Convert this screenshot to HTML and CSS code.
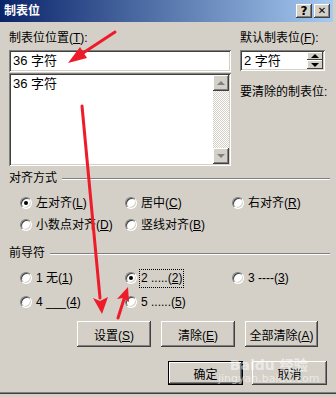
FILE: index.html
```html
<!DOCTYPE html>
<html lang="zh-CN">
<head>
    <meta charset="UTF-8">
    <title>制表位</title>
    <link rel="stylesheet" href="styles.css">
</head>
<body>
    <div class="window">
        <div class="title-bar">
            <span class="title">制表位</span>
            <div class="caption-btns">
                <span class="cap-btn">?</span>
                <span class="cap-btn close">&#x2715;</span>
            </div>
        </div>

        <div class="dialog">
            <div class="top">
                <div class="col-left">
                    <div class="lbl">制表位位置(<u>T</u>):</div>
                    <div class="field">36 字符</div>
                    <div class="listbox">
                        <div class="list-items">
                            <div class="list-item">36 字符</div>
                        </div>
                        <div class="scrollbar">
                            <span class="sb-btn"><i class="tri-up grey"></i></span>
                            <span class="sb-track"></span>
                            <span class="sb-btn"><i class="tri-down grey"></i></span>
                        </div>
                    </div>
                </div>
                <div class="col-right">
                    <div class="lbl">默认制表位(<u>F</u>):</div>
                    <div class="field spin">
                        <span>2 字符</span>
                        <div class="spin-btns">
                            <span class="spin-btn"><i class="tri-up"></i></span>
                            <span class="spin-btn"><i class="tri-down"></i></span>
                        </div>
                    </div>
                    <div class="lbl clear-lbl">要清除的制表位:</div>
                </div>
            </div>

            <div class="group-head"><span>对齐方式</span><div class="etch"></div></div>
            <div class="radio-grid align-grid">
                <div class="radio-item"><span class="radio checked"></span><span class="rlabel">左对齐(<u>L</u>)</span></div>
                <div class="radio-item"><span class="radio"></span><span class="rlabel">居中(<u>C</u>)</span></div>
                <div class="radio-item"><span class="radio"></span><span class="rlabel">右对齐(<u>R</u>)</span></div>
                <div class="radio-item"><span class="radio"></span><span class="rlabel">小数点对齐(<u>D</u>)</span></div>
                <div class="radio-item"><span class="radio"></span><span class="rlabel">竖线对齐(<u>B</u>)</span></div>
            </div>

            <div class="group-head leader-head"><span>前导符</span><div class="etch"></div></div>
            <div class="radio-grid leader-grid">
                <div class="radio-item"><span class="radio"></span><span class="rlabel">1 无(<u>1</u>)</span></div>
                <div class="radio-item"><span class="radio checked"></span><span class="rlabel focused">2 .....(<u>2</u>)</span></div>
                <div class="radio-item"><span class="radio"></span><span class="rlabel">3 ----(<u>3</u>)</span></div>
                <div class="radio-item"><span class="radio"></span><span class="rlabel">4 ___(<u>4</u>)</span></div>
                <div class="radio-item"><span class="radio"></span><span class="rlabel">5 ......(<u>5</u>)</span></div>
            </div>

            <div class="btn-row">
                <button class="btn">设置(<u>S</u>)</button>
                <button class="btn">清除(<u>E</u>)</button>
                <button class="btn">全部清除(<u>A</u>)</button>
            </div>
            <div class="btn-row bottom-row">
                <button class="btn default">确定</button>
                <button class="btn">取消</button>
            </div>
        </div>

        <!-- red annotation arrows drawn over the dialog -->
        <svg class="annot" width="336" height="397" viewBox="0 0 336 397">
            <line x1="115" y1="32" x2="80" y2="55" stroke="#ee1c2a" stroke-width="3" stroke-linecap="round"/>
            <polygon points="68,63 87,58 80,47" fill="#ee1c2a"/>
            <line x1="82" y1="106" x2="100" y2="298" stroke="#ee1c2a" stroke-width="3" stroke-linecap="round"/>
            <polygon points="102,314 108,297 100,301 93,298" fill="#ee1c2a"/>
            <line x1="118" y1="318" x2="124" y2="299" stroke="#ee1c2a" stroke-width="3" stroke-linecap="round"/>
            <polygon points="128,287 117,299 123,298 129,302" fill="#ee1c2a"/>
        </svg>

        <div class="watermark">
            <div class="wm-logo">Baidu 经验</div>
            <div class="wm-url">jingyan.baidu.com</div>
        </div>
    </div>
</body>
</html>
```

FILE: styles.css
```css
body {
    margin: 0;
    background-color: #d4d0c8;
    font-family: "Liberation Sans", "Noto Sans CJK SC", sans-serif;
    font-size: 12px;
    color: #000;
}

u {
    text-decoration: underline;
    text-underline-offset: 1px;
}

.window {
    position: relative;
    width: 336px;
    height: 394px;
    box-sizing: border-box;
    border-bottom: 1px solid #404040;
    box-shadow: inset 0 -1px #808080;
    overflow: hidden;
}

.title-bar {
    height: 22px;
    margin-right: 3px;
    background: linear-gradient(to right, #0a246a, #a6caf0);
    display: flex;
    align-items: center;
    justify-content: space-between;
    padding: 0 3px 0 4px;
}

.title {
    color: #fff;
    font-weight: bold;
    font-size: 12px;
    line-height: 14px;
}

.caption-btns {
    display: flex;
    gap: 2px;
}

.cap-btn {
    width: 16px;
    height: 14px;
    box-sizing: border-box;
    background-color: #d4d0c8;
    box-shadow: inset -1px -1px #404040, inset 1px 1px #fff, inset -2px -2px #808080;
    font-weight: bold;
    font-size: 12px;
    line-height: 14px;
    text-align: center;
    font-family: "DejaVu Sans", sans-serif;
}

.cap-btn.close {
    font-size: 10px;
}

.dialog {
    padding: 9px 6px 0 9px;
}

.top {
    display: grid;
    grid-template-columns: 222px 85px;
    column-gap: 9px;
}

.lbl {
    line-height: 15px;
    height: 15px;
    white-space: nowrap;
}

.field {
    margin-top: 4px;
    height: 22px;
    box-sizing: border-box;
    background-color: #fff;
    box-shadow: inset 1px 1px #808080, inset -1px -1px #fff, inset 2px 2px #404040, inset -2px -2px #d4d0c8;
    padding: 0 4px;
    line-height: 22px;
    font-size: 13px;
}

.spin {
    height: 21px;
    line-height: 21px;
    display: flex;
    justify-content: space-between;
    padding-right: 2px;
}

.spin-btns {
    display: flex;
    flex-direction: column;
    padding-top: 2px;
}

.spin-btn {
    width: 16px;
    height: 8px;
    background-color: #d4d0c8;
    box-shadow: inset -1px -1px #404040, inset 1px 1px #fff;
    display: flex;
    align-items: center;
    justify-content: center;
}

.spin-btn + .spin-btn {
    height: 9px;
}

.tri-up,
.tri-down {
    width: 0;
    height: 0;
    border-left: 4px solid transparent;
    border-right: 4px solid transparent;
}

.tri-up {
    border-bottom: 4px solid #000;
}

.tri-down {
    border-top: 4px solid #000;
}

.tri-up.grey {
    border-bottom-color: #808080;
}

.tri-down.grey {
    border-top-color: #808080;
}

.listbox {
    margin-top: 1px;
    height: 93px;
    box-sizing: border-box;
    background-color: #fff;
    box-shadow: inset 1px 1px #808080, inset -1px -1px #fff, inset 2px 2px #404040, inset -2px -2px #d4d0c8;
    padding: 2px;
    display: flex;
}

.list-items {
    flex: 1;
    padding: 1px 2px;
}

.list-item {
    line-height: 15px;
    font-size: 13px;
}

.scrollbar {
    width: 16px;
    display: flex;
    flex-direction: column;
}

.sb-btn {
    height: 16px;
    background-color: #d4d0c8;
    box-shadow: inset -1px -1px #404040, inset 1px 1px #fff, inset -2px -2px #808080;
    display: flex;
    align-items: center;
    justify-content: center;
}

.sb-track {
    flex: 1;
    background: repeating-conic-gradient(#fff 0 25%, #d4d0c8 0 50%) 0 0 / 2px 2px;
}

.clear-lbl {
    margin-top: 14px;
}

.group-head {
    display: flex;
    align-items: center;
    margin-top: 5px;
    line-height: 15px;
}

.etch {
    flex: 1;
    margin-left: 5px;
    border-top: 1px solid #808080;
    border-bottom: 1px solid #fff;
}

.leader-head {
    margin-top: 10px;
}

.radio-grid {
    display: grid;
    grid-template-columns: 105px 107px auto;
    padding-left: 11px;
}

.align-grid {
    margin-top: 6px;
    grid-auto-rows: 22px;
}

.leader-grid {
    margin-top: 5px;
    grid-auto-rows: 24px;
}

.radio-item {
    display: flex;
    align-items: center;
    gap: 2px;
    white-space: nowrap;
}

.radio {
    position: relative;
    width: 12px;
    height: 12px;
    box-sizing: border-box;
    border-radius: 50%;
    background-color: #fff;
    border: 1px solid;
    border-color: #808080 #fff #fff #808080;
    box-shadow: inset 1px 1px #404040, inset -1px -1px #d4d0c8;
    flex-shrink: 0;
}

.radio.checked::after {
    content: "";
    position: absolute;
    left: 3px;
    top: 3px;
    width: 4px;
    height: 4px;
    border-radius: 50%;
    background-color: #000;
}

.rlabel {
    padding: 1px 1px;
    border: 1px solid transparent;
    line-height: 15px;
}

.rlabel.focused {
    border: 1px dotted #000;
}

.btn-row {
    display: flex;
    gap: 10px;
    padding-left: 68px;
    margin-top: 7px;
}

.btn {
    width: 74px;
    height: 26px;
    border: none;
    background-color: #d4d0c8;
    box-shadow: inset -1px -1px #404040, inset 1px 1px #fff, inset -2px -2px #808080;
    font-family: "Liberation Sans", "Noto Sans CJK SC", sans-serif;
    font-size: 12px;
    color: #000;
    padding: 0;
}

.btn-row .btn:last-child {
    width: 73px;
}

.bottom-row {
    margin-top: 14px;
    padding-left: 159px;
    gap: 9px;
}

.bottom-row .btn,
.bottom-row .btn:last-child {
    width: 75px;
    height: 24px;
}

.btn.default {
    box-shadow: inset 0 0 0 1px #000, inset -2px -2px #404040, inset 2px 2px #fff, inset -3px -3px #808080;
}

.annot {
    position: absolute;
    left: 0;
    top: 0;
    pointer-events: none;
}

.watermark {
    position: absolute;
    left: 218px;
    top: 358px;
    color: rgba(255, 255, 255, 0.55);
    text-align: center;
    pointer-events: none;
}

.wm-logo {
    font-family: "DejaVu Sans", "Noto Sans CJK SC", sans-serif;
    font-weight: bold;
    font-size: 14px;
    line-height: 15px;
}

.wm-url {
    font-family: "DejaVu Sans", sans-serif;
    font-size: 11px;
    line-height: 12px;
}
```
